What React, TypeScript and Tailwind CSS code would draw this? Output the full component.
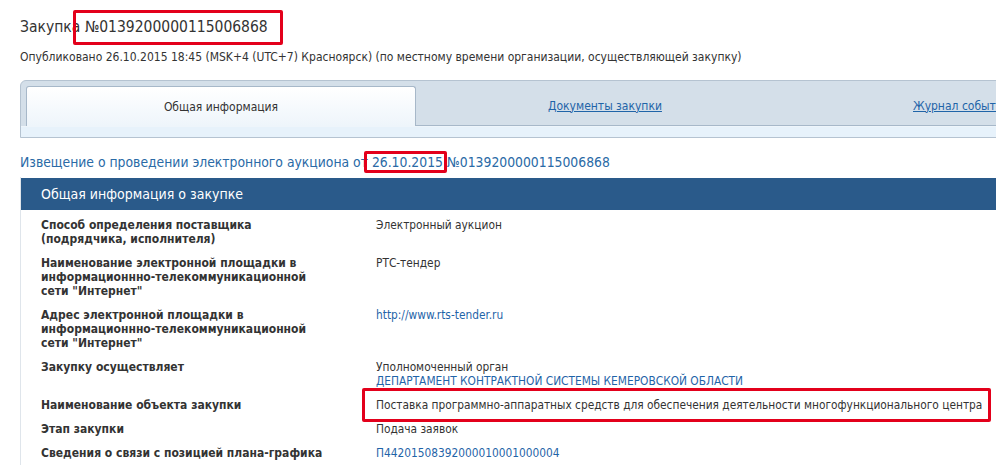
import React from "react";

const font = { fontFamily: '"DejaVu Sans Condensed", "DejaVu Sans", sans-serif' };

type Row = { label: string[]; value: React.ReactNode };

const rows: Row[] = [
  {
    label: ["Способ определения поставщика", "(подрядчика, исполнителя)"],
    value: <span>Электронный аукцион</span>,
  },
  {
    label: ["Наименование электронной площадки в", "информационнно-телекоммуникационной", 'сети "Интернет"'],
    value: <span>РТС-тендер</span>,
  },
  {
    label: ["Адрес электронной площадки в", "информационнно-телекоммуникационной", 'сети "Интернет"'],
    value: <a className="text-[#1f64a8]">http://www.rts-tender.ru</a>,
  },
  {
    label: ["Закупку осуществляет"],
    value: (
      <div>
        <div>Уполномоченный орган</div>
        <a className="text-[#1f64a8]">ДЕПАРТАМЕНТ КОНТРАКТНОЙ СИСТЕМЫ КЕМЕРОВСКОЙ ОБЛАСТИ</a>
      </div>
    ),
  },
  {
    label: ["Наименование объекта закупки"],
    value: (
      <span className="relative">
        Поставка программно-аппаратных средств для обеспечения деятельности многофункционального центра
        <span className="absolute -left-[14px] -right-[9px] -top-[10px] -bottom-[10px] border-[3px] border-[#e3001b] rounded-[2px]" />
      </span>
    ),
  },
  { label: ["Этап закупки"], value: <span>Подача заявок</span> },
  {
    label: ["Сведения о связи с позицией плана-графика"],
    value: <a className="text-[#1f64a8]">П44201508392000010001000004</a>,
  },
];

export default function App() {
  return (
    <div className="w-[996px] h-[469px] overflow-hidden bg-white text-[#333]" style={font}>
      <div className="w-[1100px] pl-5">
        <div className="pt-[17px] text-[15.5px] leading-[20px]">
          Закупка{" "}
          <span className="relative">
            №0139200000115006868
            <span className="absolute -left-[12px] -right-[15px] -top-[8px] -bottom-[9px] border-[3px] border-[#e3001b] rounded-[2px]" />
          </span>
        </div>
        <div className="mt-[13px] text-[12px] leading-[14px]">
          Опубликовано 26.10.2015 18:45 (MSK+4 (UTC+7) Красноярск) (по местному времени организации, осуществляющей закупку)
        </div>

        <div className="mt-[16px] border border-[#b5c3d1] rounded-tl-[6px] bg-[#d4dfe9]">
          <div className="flex pl-[5px] pt-[5px] h-[45px]">
            <div className="w-[390px] flex items-center justify-center text-[12px] border border-b-0 border-[#a7b8c9] rounded-t-[3px] bg-gradient-to-b from-white to-[#eef5fb]">
              Общая информация
            </div>
            <div className="w-[378px] flex items-center justify-center text-[12px] border-b border-[#a7b8c9]">
              <a className="text-[#1f64a8] underline">Документы закупки</a>
            </div>
            <div className="w-[300px] flex items-center pl-[119px] text-[12px] border-b border-[#a7b8c9]">
              <a className="text-[#1f64a8] underline whitespace-nowrap">Журнал событий</a>
            </div>
          </div>
          <div className="h-[11px] bg-[#e7f2fb] border-t border-[#eef5fb]" />
        </div>

        <div className="mt-[15px] text-[13.8px] leading-[18px] text-[#2a6aa6]">
          Извещение о проведении электронного аукциона от{" "}
          <span className="relative">
            26.10.2015
            <span className="absolute -left-[8px] -right-[4px] -top-[3px] -bottom-[3px] border-[3px] border-[#e3001b] rounded-[2px]" />
          </span>{" "}
          №0139200000115006868
        </div>

        <div className="mt-[6px] border-l border-[#dfe5eb] pt-[1px]">
          <div className="h-[32px] bg-[#2a5a8a] text-white text-[14px] flex items-center pl-5">
            Общая информация о закупке
          </div>
          <div className="text-[12px] leading-[14px] pt-[3px]">
            {rows.map((r, i) => (
              <div key={i} className="flex py-[5px]">
                <div className="w-[355px] pl-5 font-bold text-[#333]">
                  {r.label.map((l, j) => (
                    <div key={j}>{l}</div>
                  ))}
                </div>
                <div className="flex-1 text-[11.8px]">{r.value}</div>
              </div>
            ))}
          </div>
        </div>
      </div>
    </div>
  );
}
